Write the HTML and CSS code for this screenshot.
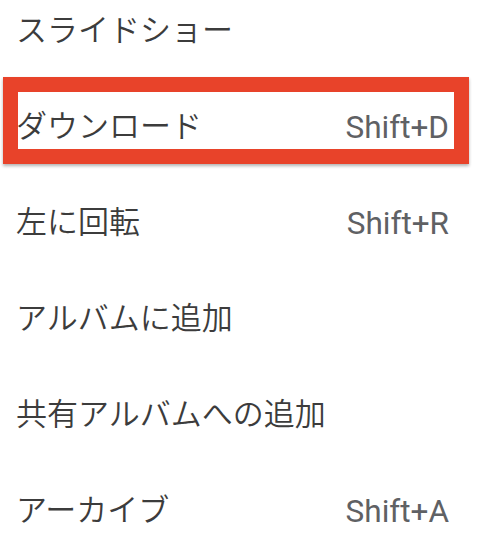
FILE: index.html
```html
<!DOCTYPE html>
<html lang="ja">
<head>
<meta charset="utf-8">
<link rel="stylesheet" href="styles.css">
</head>
<body>
<div class="menu">
  <div class="item"><span class="label">スライドショー</span></div>
  <div class="item"><span class="label">ダウンロード</span><span class="key">Shift+D</span></div>
  <div class="item"><span class="label">左に回転</span><span class="key">Shift+R</span></div>
  <div class="item"><span class="label">アルバムに追加</span></div>
  <div class="item"><span class="label">共有アルバムへの追加</span></div>
  <div class="item"><span class="label">アーカイブ</span><span class="key">Shift+A</span></div>
</div>
<div class="highlight"></div>
</body>
</html>
```
FILE: styles.css
```css
html, body {
  margin: 0;
  padding: 0;
  background: #ffffff;
  overflow: hidden;
}
body {
  width: 479px;
  height: 551px;
  position: relative;
}
.menu {
  margin-top: -16px;
  display: flex;
  flex-direction: column;
}
.item {
  height: 96px;
  display: flex;
  align-items: center;
  justify-content: space-between;
  padding: 0 30px 0 16px;
}
.label {
  font-family: "Noto Sans CJK JP", "Noto Sans", sans-serif;
  font-size: 31px;
  font-weight: 350;
  color: #3c3c3c;
  line-height: 1;
  margin-bottom: 10px;
}
.key {
  font-family: Roboto, "Liberation Sans", sans-serif;
  font-size: 31.5px;
  color: #5f6164;
  line-height: 1;
}
.highlight {
  position: absolute;
  left: 3px;
  top: 77px;
  width: 436px;
  height: 57px;
  border: 15px solid #e8432a;
  box-shadow: 0 2px 3px rgba(0, 0, 0, 0.3);
}
```
